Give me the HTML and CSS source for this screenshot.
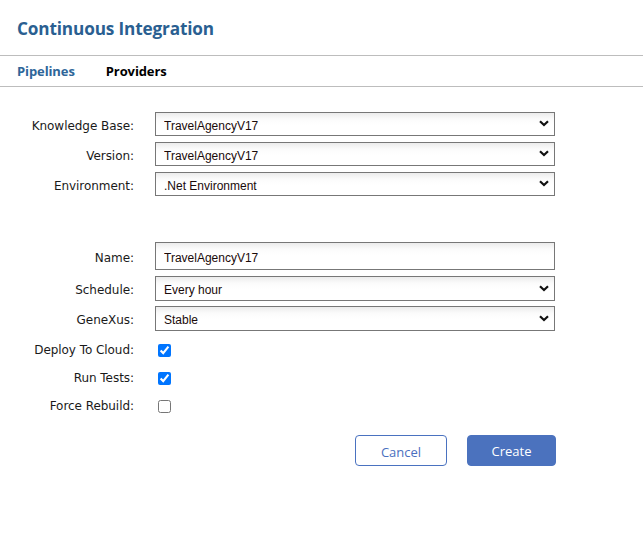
FILE: index.html
```html
<!DOCTYPE html>
<html>
<head>
<meta charset="utf-8">
<link rel="stylesheet" href="styles.css">
</head>
<body>
<header class="header"><h1 class="title">Continuous Integration</h1></header>
<nav class="tabs">
  <span class="tab tab-active">Pipelines</span>
  <span class="tab">Providers</span>
</nav>
<main class="form">
  <div class="group group-top">
    <div class="row row-select">
      <label class="label">Knowledge Base:</label>
      <div class="select-wrap">
        <select class="select"><option>TravelAgencyV17</option></select>
        <svg class="chev" width="10" height="7" viewBox="0 0 10 7"><path d="M1 1.2 L5 5 L9 1.2" fill="none" stroke="#111" stroke-width="2.2"/></svg>
      </div>
    </div>
    <div class="row row-select">
      <label class="label">Version:</label>
      <div class="select-wrap">
        <select class="select"><option>TravelAgencyV17</option></select>
        <svg class="chev" width="10" height="7" viewBox="0 0 10 7"><path d="M1 1.2 L5 5 L9 1.2" fill="none" stroke="#111" stroke-width="2.2"/></svg>
      </div>
    </div>
    <div class="row row-select">
      <label class="label">Environment:</label>
      <div class="select-wrap">
        <select class="select"><option>.Net Environment</option></select>
        <svg class="chev" width="10" height="7" viewBox="0 0 10 7"><path d="M1 1.2 L5 5 L9 1.2" fill="none" stroke="#111" stroke-width="2.2"/></svg>
      </div>
    </div>
  </div>
  <div class="group group-bottom">
    <div class="row row-input">
      <label class="label">Name:</label>
      <input class="input" type="text" value="TravelAgencyV17">
    </div>
    <div class="row row-select2">
      <label class="label">Schedule:</label>
      <div class="select-wrap">
        <select class="select"><option>Every hour</option></select>
        <svg class="chev" width="10" height="7" viewBox="0 0 10 7"><path d="M1 1.2 L5 5 L9 1.2" fill="none" stroke="#111" stroke-width="2.2"/></svg>
      </div>
    </div>
    <div class="row row-select2">
      <label class="label">GeneXus:</label>
      <div class="select-wrap">
        <select class="select"><option>Stable</option></select>
        <svg class="chev" width="10" height="7" viewBox="0 0 10 7"><path d="M1 1.2 L5 5 L9 1.2" fill="none" stroke="#111" stroke-width="2.2"/></svg>
      </div>
    </div>
    <div class="row row-check first-check">
      <label class="label">Deploy To Cloud:</label>
      <input class="check" type="checkbox" checked>
    </div>
    <div class="row row-check">
      <label class="label">Run Tests:</label>
      <input class="check" type="checkbox" checked>
    </div>
    <div class="row row-check">
      <label class="label">Force Rebuild:</label>
      <input class="check" type="checkbox">
    </div>
  </div>
  <div class="actions">
    <button class="btn btn-cancel">Cancel</button>
    <button class="btn btn-create">Create</button>
  </div>
</main>
</body>
</html>
```

FILE: styles.css
```css
* { box-sizing: border-box; }
html, body { margin: 0; padding: 0; background: #fff; }
body { font-family: "DejaVu Sans", Verdana, sans-serif; color: #111; }

.header {
  height: 56px;
  border-bottom: 1px solid #bdbdbd;
  padding: 17px 0 0 17px;
}
.title {
  margin: 0;
  font-family: "Open Sans", "Noto Sans", sans-serif;
  font-weight: 700;
  font-size: 17.2px;
  line-height: 24px;
  color: #2a5f91;
  letter-spacing: -0.15px;
}

.tabs {
  height: 31px;
  border-bottom: 1px solid #bdbdbd;
  display: flex;
  align-items: center;
  padding-left: 17px;
  gap: 31px;
}
.tab {
  font-family: "Open Sans", "Noto Sans", sans-serif;
  font-weight: 700;
  font-size: 13px;
  color: #000;
  letter-spacing: -0.1px;
}
.tab-active { color: #2e6699; }

.form { padding-top: 25px; }

.row {
  display: flex;
  align-items: center;
}
.label {
  width: 134px;
  text-align: right;
  font-size: 12px;
  color: #1a1a1a;
  letter-spacing: -0.05px;
  flex: none;
  padding-top: 3px;
}
.row-check .label { padding-top: 0; }
.row > .label + * { margin-left: 21px; }

.row-select { height: 24px; margin-bottom: 6px; }
.row-select2 { height: 25px; margin-bottom: 5px; }
.row-input { height: 28px; margin-bottom: 6px; }
.row-check { height: 28px; }
.first-check { margin-top: 3px; }

.group-bottom { margin-top: 46px; }

.select-wrap {
  position: relative;
  width: 400px;
  height: 100%;
}
.select, .input {
  appearance: none;
  -webkit-appearance: none;
  width: 100%;
  height: 100%;
  margin: 0;
  border: 1px solid #777;
  border-radius: 0;
  background: linear-gradient(#ececec 0, #fbfbfb 6px, #fff 12px);
  font-family: "Liberation Sans", Arial, sans-serif;
  font-size: 12px;
  color: #1a0a0a;
  padding: 3px 0 0 8px;
  outline: none;
}
.input { width: 400px; flex: none; padding-top: 4px; }
.chev {
  position: absolute;
  right: 6px;
  top: 50%;
  margin-top: -4px;
  pointer-events: none;
}

.check {
  width: 13px;
  height: 13px;
  margin: 0 0 0 24px !important;
  accent-color: #0075ff;
}

.actions {
  display: flex;
  gap: 20px;
  padding-left: 355px;
  margin-top: 15px;
}
.btn {
  height: 31px;
  border-radius: 4px;
  font-family: "Open Sans", "Noto Sans", sans-serif;
  font-size: 13px;
  cursor: pointer;
}
.btn-cancel {
  width: 92px;
  background: #fff;
  border: 1px solid #4a72c0;
  color: #4a6fc0;
  padding-top: 3px;
}
.btn-create {
  width: 89px;
  background: #4b72be;
  border: 1px solid #4b72be;
  color: #fff;
  padding-top: 2px;
}
```
